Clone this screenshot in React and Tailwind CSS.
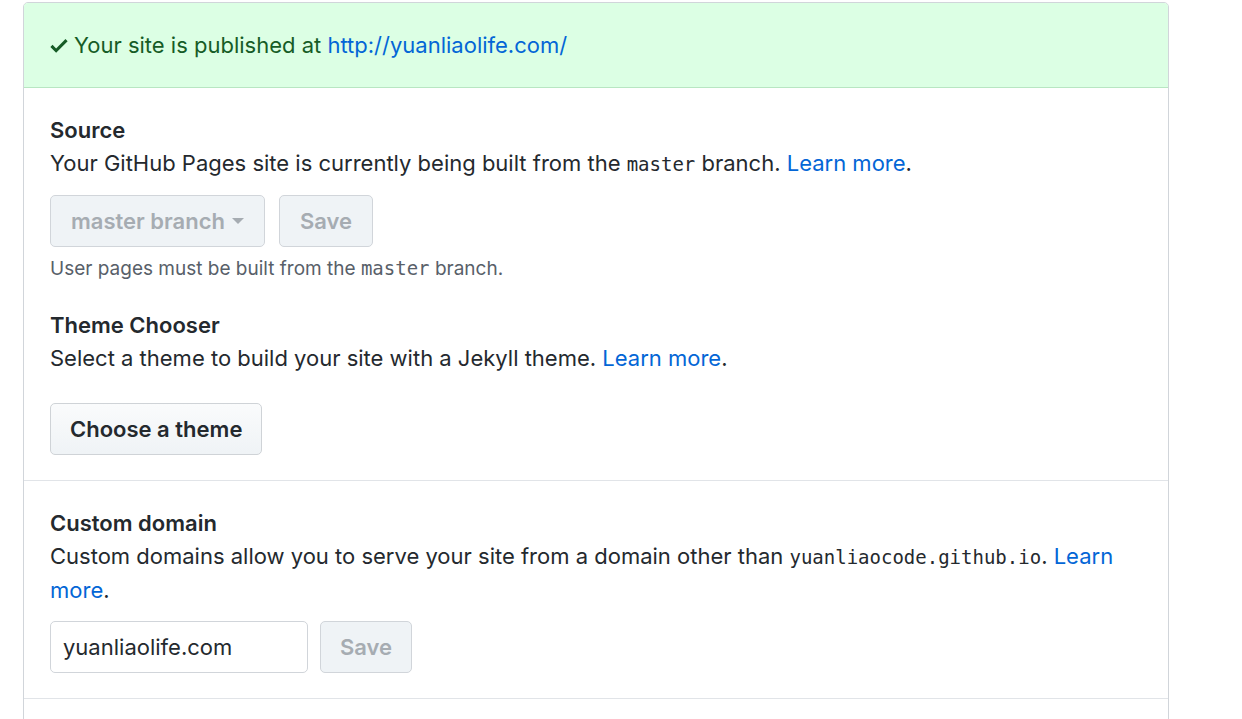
import React from "react";

const sans = { fontFamily: "Inter, 'Noto Sans', sans-serif" };

const LearnMore = () => (
  <a href="#" className="text-[#0366d6]">
    Learn more
  </a>
);

const Code = ({ children }) => (
  <code className="font-['DejaVu_Sans_Mono',monospace] text-[19px]">{children}</code>
);

const CheckIcon = () => (
  <svg viewBox="0 0 12 16" className="w-[18px] h-[23px] fill-current mr-[6px] inline-block align-[-4px]">
    <path fillRule="evenodd" d="M12 5l-8 8-4-4 1.5-1.5L4 10l6.5-6.5L12 5z" />
  </svg>
);

const App = () => {
  return (
    <div
      className="min-h-[719px] bg-white pt-[2px] pl-[23px] text-[#24292e] text-[22px] leading-[33px]"
      style={sans}
    >
      <div className="w-[1146px] border border-[#d1d5da] rounded-t-[5px] overflow-hidden">
        {/* flash */}
        <div className="bg-[#dcffe4] border-b border-[#b8e6c2] h-[85px] flex items-center pl-[26px] text-[#165c26]">
          <span>
            <CheckIcon />
            Your site is published at{" "}
            <a href="#" className="text-[#0366d6]">
              http://yuanliaolife.com/
            </a>
          </span>
        </div>

        {/* source + theme */}
        <div className="px-[26px] pt-[26px] pb-[25px] border-b border-[#e1e4e8]">
          <h3 className="font-semibold">Source</h3>
          <p>
            Your GitHub Pages site is currently being built from the <Code>master</Code> branch.{" "}
            <LearnMore />.
          </p>
          <div className="flex gap-[14px] mt-[14px]">
            <button
              disabled
              className="h-[52px] px-[20px] rounded-[5px] border border-[#d1d5da] bg-[#eff3f6] text-[#a6acb2] font-semibold flex items-center"
            >
              master branch
              <span className="ml-[7px] inline-block w-0 h-0 border-l-[6px] border-r-[6px] border-t-[6px] border-l-transparent border-r-transparent border-t-[#a6acb2]" />
            </button>
            <button
              disabled
              className="h-[52px] px-[20px] rounded-[5px] border border-[#d1d5da] bg-[#eff3f6] text-[#a6acb2] font-semibold"
            >
              Save
            </button>
          </div>
          <p className="text-[19px] leading-[27px] text-[#586069] mt-[8px]">
            User pages must be built from the <Code>master</Code> branch.
          </p>

          <h3 className="font-semibold mt-[27px]">Theme Chooser</h3>
          <p>
            Select a theme to build your site with a Jekyll theme. <LearnMore />.
          </p>
          <button className="mt-[28px] h-[52px] px-[19px] rounded-[5px] border border-[#cfd3d7] bg-gradient-to-b from-[#fafbfc] to-[#eff3f6] font-semibold">
            Choose a theme
          </button>
        </div>

        {/* custom domain */}
        <div className="px-[26px] pt-[26px] pb-[25px] border-b border-[#e1e4e8]">
          <h3 className="font-semibold">Custom domain</h3>
          <p>
            Custom domains allow you to serve your site from a domain other than{" "}
            <Code>yuanliaocode.github.io</Code>. <LearnMore />.
          </p>
          <div className="flex gap-[12px] mt-[14px]">
            <input
              defaultValue="yuanliaolife.com"
              className="w-[258px] h-[52px] px-[12px] rounded-[5px] border border-[#d1d5da] bg-white outline-none"
            />
            <button
              disabled
              className="h-[52px] px-[19px] rounded-[5px] border border-[#d1d5da] bg-[#eff3f6] text-[#a6acb2] font-semibold"
            >
              Save
            </button>
          </div>
        </div>
        <div className="h-[30px]" />
      </div>
    </div>
  );
};

export default App;
